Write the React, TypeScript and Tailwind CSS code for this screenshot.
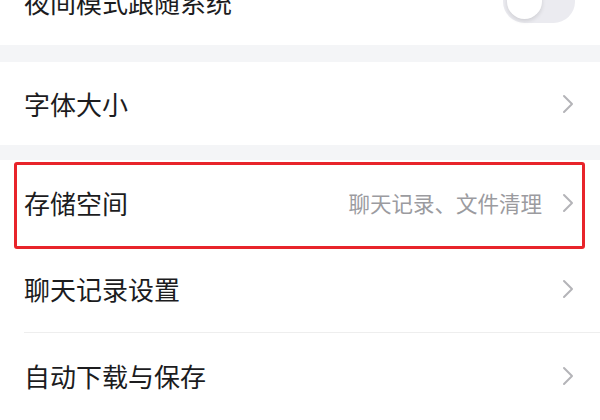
import React from "react";

const Chevron = () => (
  <svg width="12" height="20" viewBox="0 0 12 20" fill="none" className="shrink-0">
    <path d="M2 2 L10 10 L2 18" stroke="#b4b4b8" strokeWidth="2" strokeLinecap="round" strokeLinejoin="round" />
  </svg>
);

const Row = ({
  label,
  sub,
  short,
  children,
}: {
  label: string;
  sub?: string;
  short?: boolean;
  children?: React.ReactNode;
}) => (
  <div className={`relative flex ${short ? "h-[83px]" : "h-[86px]"} items-center bg-white pl-[24px] pr-[26px]`}>
    <span className="flex-1 text-[26px] leading-none text-[#1c1c1e]">{label}</span>
    {sub && <span className="mr-[20px] text-[21.5px] leading-none text-[#9b9b9f]">{sub}</span>}
    <Chevron />
    {children}
  </div>
);

export default function App() {
  return (
    <div
      className="h-[420px] w-[600px] overflow-hidden bg-white"
      style={{ fontFamily: '"Noto Sans CJK SC", "Noto Sans", sans-serif' }}
    >
      <div className="-mt-[42px] flex h-[87px] items-center bg-white pl-[24px] pr-[25px]">
        <span className="flex-1 text-[26px] leading-none text-[#1c1c1e]">夜间模式跟随系统</span>
        <div className="relative h-[43px] w-[72px] rounded-full bg-[#ebebf0]">
          <div className="absolute left-[4px] top-[4px] h-[35px] w-[35px] rounded-full bg-white shadow-[0_2px_4px_rgba(0,0,0,0.12)]" />
        </div>
      </div>
      <div className="h-[17px] bg-[#f4f5f7]" />
      <Row label="字体大小" short />
      <div className="h-[15px] bg-[#f4f5f7]" />
      <Row label="存储空间" sub="聊天记录、文件清理">
        <div className="pointer-events-none absolute bottom-[-3px] left-[14px] right-[15px] top-[2px] z-10 rounded-[3px] border-[3px] border-[#e8242a]" />
      </Row>
      <Row label="聊天记录设置" />
      <div className="bg-white pl-[24px]">
        <div className="h-px bg-[#eeeeee]" />
      </div>
      <Row label="自动下载与保存" />
    </div>
  );
}
